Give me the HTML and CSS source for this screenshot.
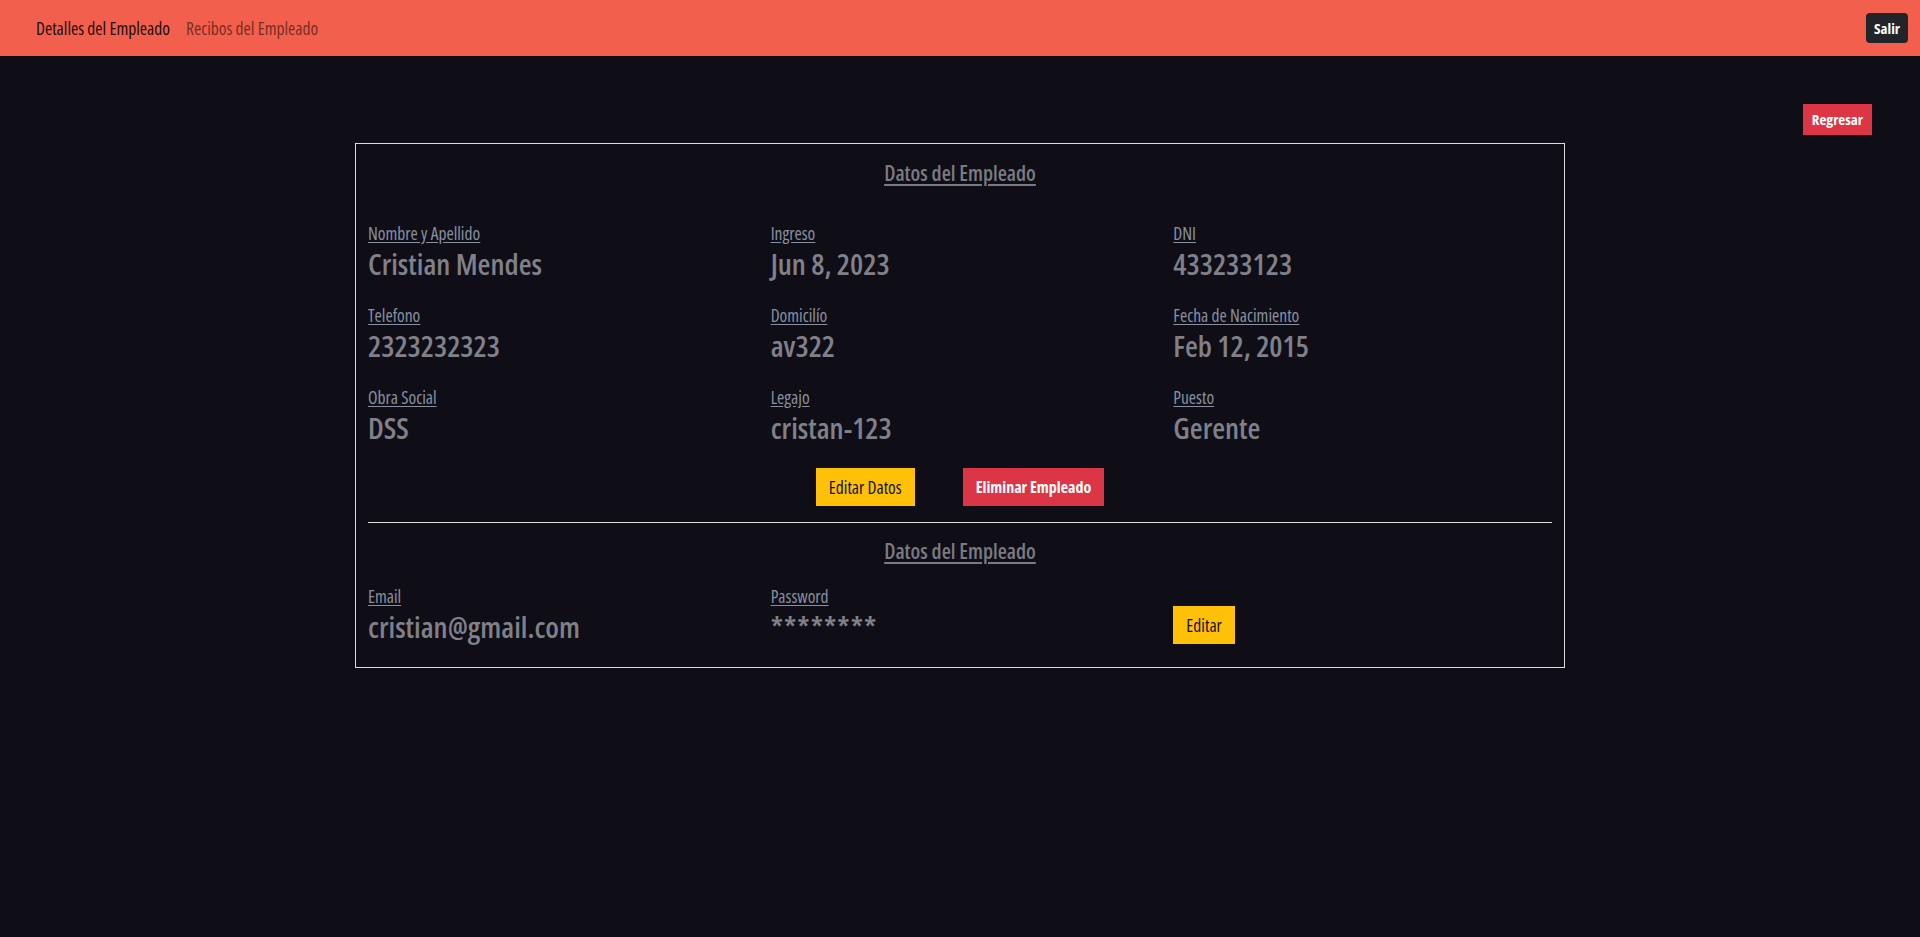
FILE: index.html
```html
<!DOCTYPE html>
<html lang="es">
<head>
<meta charset="utf-8">
<title>Detalles del Empleado</title>
<link rel="stylesheet" href="styles.css">
</head>
<body>
<nav class="navbar">
  <div class="nav-links">
    <a class="nav-link active" href="#">Detalles del Empleado</a>
    <a class="nav-link" href="#">Recibos del Empleado</a>
  </div>
  <button class="btn btn-dark">Salir</button>
</nav>
<main class="page">
  <div class="actions-top">
    <button class="btn btn-red btn-sm">Regresar</button>
  </div>
  <section class="card">
    <h3 class="card-title">Datos del Empleado</h3>
    <div class="fields">
      <div class="field"><div class="label">Nombre y Apellido</div><div class="value">Cristian Mendes</div></div>
      <div class="field"><div class="label">Ingreso</div><div class="value">Jun 8, 2023</div></div>
      <div class="field"><div class="label">DNI</div><div class="value">433233123</div></div>
      <div class="field"><div class="label">Telefono</div><div class="value">2323232323</div></div>
      <div class="field"><div class="label">Domicilío</div><div class="value">av322</div></div>
      <div class="field"><div class="label">Fecha de Nacimiento</div><div class="value">Feb 12, 2015</div></div>
      <div class="field"><div class="label">Obra Social</div><div class="value">DSS</div></div>
      <div class="field"><div class="label">Legajo</div><div class="value">cristan-123</div></div>
      <div class="field"><div class="label">Puesto</div><div class="value">Gerente</div></div>
    </div>
    <div class="card-buttons">
      <button class="btn btn-yellow">Editar Datos</button>
      <button class="btn btn-red btn-delete">Eliminar Empleado</button>
    </div>
    <hr class="divider">
    <h3 class="card-title">Datos del Empleado</h3>
    <div class="fields fields-last">
      <div class="field"><div class="label">Email</div><div class="value">cristian@gmail.com</div></div>
      <div class="field"><div class="label">Password</div><div class="value value-pass">********</div></div>
      <div class="field field-btn"><button class="btn btn-yellow">Editar</button></div>
    </div>
  </section>
</main>
</body>
</html>
```
FILE: styles.css
```css
* { box-sizing: border-box; }

body {
  margin: 0;
  background: #0f0e17;
  font-family: "Open Sans", "DejaVu Sans Condensed", sans-serif;
  font-stretch: 75%;
  color: #a7a9be;
  min-height: 937px;
}

.navbar {
  height: 56px;
  background: #f25f4c;
  display: flex;
  align-items: center;
  justify-content: space-between;
  padding: 0 12px 0 28px;
}

.nav-links { display: flex; }

.nav-link {
  font-size: 17.5px;
  line-height: 24px;
  padding: 8px;
  text-decoration: none;
  color: rgba(0, 0, 0, 0.55);
}

.nav-link.active { color: rgba(0, 0, 0, 0.9); }

.btn {
  font-family: inherit;
  font-stretch: 75%;
  font-size: 17.5px;
  line-height: 24px;
  padding: 6px 12px;
  border: 1px solid transparent;
  border-radius: 0;
  cursor: pointer;
}

.btn-dark {
  background: #212529;
  color: #fff;
  font-weight: 700;
  font-size: 15px;
  line-height: 20px;
  padding: 4px 7px;
  border-radius: 4px;
}

.btn-sm {
  font-size: 15px;
  line-height: 21px;
  padding: 4px 8px;
}

.btn-red { background: #dc3545; color: #fff; font-weight: 700; }
.btn-delete { font-size: 16px; }
.btn-yellow { background: #ffc107; color: #111; }

.page { padding: 48px 48px 0; }

.actions-top {
  display: flex;
  justify-content: flex-end;
  margin-bottom: 8px;
}

.card {
  width: 1210px;
  margin: 0 auto;
  border: 1px solid #dcdcdc;
  padding: 17px 12px 23px;
}

.card-title {
  margin: 0;
  text-align: center;
  font-size: 21px;
  line-height: 24px;
  font-weight: 600;
  color: #7a7a82;
  text-decoration: underline;
  text-underline-offset: 3px;
}

.fields {
  display: grid;
  grid-template-columns: repeat(3, 1fr);
  column-gap: 24px;
  row-gap: 22px;
  margin-top: 36px;
}

.fields-last { margin-top: 21px; }

.label {
  font-size: 17.5px;
  line-height: 24px;
  color: #8890a0;
  text-decoration: underline;
  text-underline-offset: 2px;
}

.value {
  margin-top: 2px;
  font-size: 29.5px;
  line-height: 34px;
  font-weight: 600;
  color: #808088;
}

.value-pass { letter-spacing: 1px; }

.field-btn { align-self: end; }

.card-buttons {
  display: flex;
  justify-content: center;
  gap: 48px;
  margin-top: 23px;
}

.divider {
  border: 0;
  border-top: 1px solid #dcdcdc;
  margin: 16px 0 16px;
}
```
